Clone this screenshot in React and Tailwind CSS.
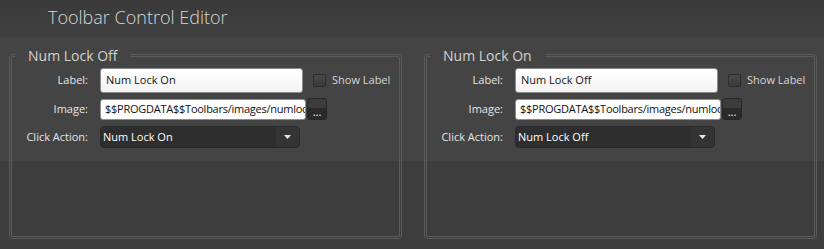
import React from 'react';

const font = { fontFamily: '"Open Sans", "Liberation Sans", sans-serif' };

const Arrow = () => (
  <svg width="7" height="4" viewBox="0 0 7 4" className="block">
    <path d="M0 0 H7 L3.5 4 Z" fill="#e8e8e8" />
  </svg>
);

const Group = ({ title, label, action }) => (
  <fieldset className="m-0 p-0 w-[393px] h-[193px] rounded-[4px] border-[3px] border-double border-[#5b5b5b]">
    <legend className="ml-[3px] px-[13px] text-[14px] leading-[19px] text-[#d2d2d2]">{title}</legend>

    <div className="flex flex-col pt-[3px] text-[11px] text-[#e6e6e6]">
      {/* Label */}
      <div className="flex items-center h-[25px]">
        <span className="w-[76px] text-right">Label:</span>
        <div className="ml-[12px] w-[203px] h-[25px] flex items-center px-[5px] rounded-[3px] border border-[#8c8c8c] bg-[linear-gradient(to_bottom,#ffffff,#f3f3f3)] text-[#111]">
          {label}
        </div>
        <span className="ml-[10px] w-[13px] h-[13px] rounded-[2px] border border-[#2c2c2c] bg-[linear-gradient(to_bottom,#4a4a4a,#393939)]" />
        <span className="ml-[6px] text-[#d6d6d6]">Show Label</span>
      </div>

      {/* Image */}
      <div className="flex items-center h-[22px] mt-[5px]">
        <span className="w-[76px] text-right">Image:</span>
        <div className="ml-[12px] w-[206px] h-[21px] flex items-center pl-[4px] rounded-[3px] border border-[#8c8c8c] bg-white text-[#111] overflow-hidden whitespace-nowrap tracking-[-0.25px]">
          $$PROGDATA$$Toolbars/images/numloc
        </div>
        <div className="ml-[1px] w-[20px] h-[22px] rounded-[3px] border border-[#262626] bg-[linear-gradient(to_bottom,#3c3c3c_0,#3c3c3c_45%,#2a2a2a_45%,#2a2a2a)] flex items-end justify-center pb-[1px] text-[11px] leading-[12px] text-white">
          ...
        </div>
      </div>

      {/* Click Action */}
      <div className="flex items-center h-[22px] mt-[6px]">
        <span className="w-[76px] text-right">Click Action:</span>
        <div className="ml-[12px] w-[200px] h-[22px] flex rounded-[4px] overflow-hidden bg-[#2e2e2e] border border-[#2a2a2a]">
          <span className="flex-1 flex items-center pl-[2px] text-white">{action}</span>
          <span className="w-[23px] flex items-center justify-center bg-[#343434]">
            <Arrow />
          </span>
        </div>
      </div>
    </div>
  </fieldset>
);

export default function App() {
  return (
    <div style={font} className="w-[824px] h-[249px] overflow-hidden flex flex-col bg-[#3d3d3d]">
      <div className="h-[38px] shrink-0 pl-[48px] pt-[5px] bg-[linear-gradient(to_bottom,#3a3a3a,#404040)] text-[18px] leading-[24px] text-[#d8d8d8] font-light">
        Toolbar Control Editor
      </div>
      <div className="flex-1 flex gap-[22px] pl-[9px] bg-[linear-gradient(to_bottom,#444444_0,#444444_123px,#3d3d3d_123px)]">
        <div className="mt-[8px]">
          <Group title="Num Lock Off" label="Num Lock On" action="Num Lock On" />
        </div>
        <div className="mt-[8px]">
          <Group title="Num Lock On" label="Num Lock Off" action="Num Lock Off" />
        </div>
      </div>
    </div>
  );
}
